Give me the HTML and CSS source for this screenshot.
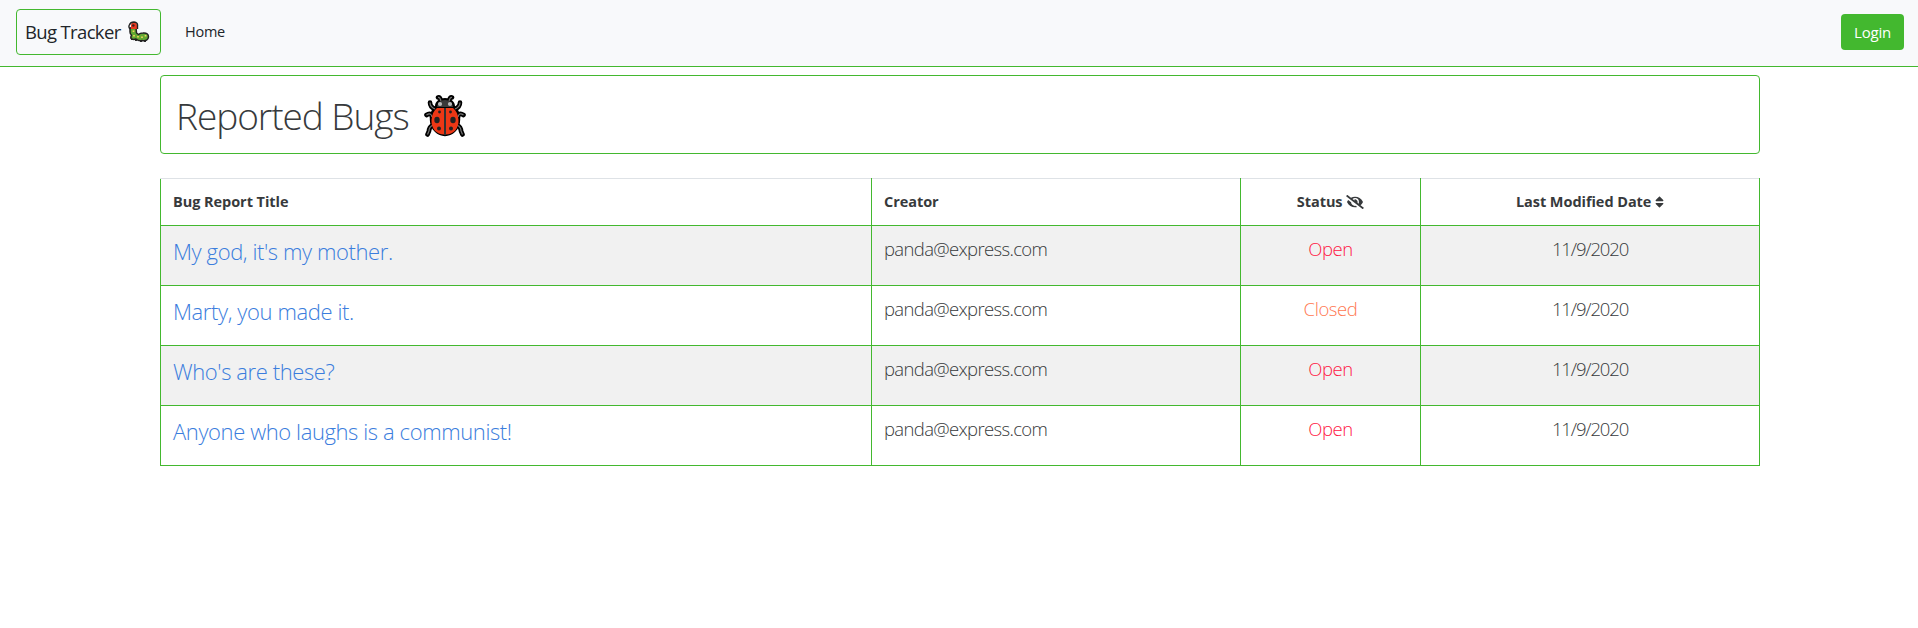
FILE: index.html
```html
<!DOCTYPE html>
<html lang="en">
<head>
<meta charset="utf-8">
<title>Bug Tracker</title>
<link rel="stylesheet" href="styles.css">
</head>
<body>
<nav class="navbar">
  <a class="brand"><span class="brand-text">Bug Tracker</span>
    <svg class="brand-icon" viewBox="0 0 22 22">
      <path d="M2 7V11Q2 13 3.500 14Q2.500 16 3 17.500Q5 19 8 18Q11 20.500 14 19.500Q20 20.500 20.500 16Q20.500 11.500 15 12Q12 12 10.500 13.500L8.500 12L8 6Z" fill="#62a832" stroke="#222" stroke-width="1.500" stroke-linejoin="round"/>
      <path d="M4 18v1M8 18.500v1.500M13 19v2M17 19v2" stroke="#222" stroke-width="1.900"/>
      <path d="M3 8V4.500Q3 1.500 6 1.500Q9.300 1.500 9 5V8Z" fill="#ea3b20"/>
      <path d="M2 8Q.300 6 1.300 4Q2.500 1 6 1Q10 1.500 9.500 5V8" fill="none" stroke="#222" stroke-width="1.400"/>
      <circle cx="5.300" cy="4.500" r="1.300" fill="#3f2020"/>
      <path d="M5.500 9.500v1.600M6 14v1.600M10 15v1.600M14 15.500v1.600M17.500 14v1.600" stroke="#f2d45c" stroke-width="1.700"/>
    </svg>
  </a>
  <a class="nav-link">Home</a>
  <button class="login">Login</button>
</nav>
<main class="container">
  <header class="heading">
    <h1 class="heading-text">Reported Bugs</h1>
    <svg class="heading-icon" viewBox="0 0 42 42">
      <g fill="none" stroke="#000" stroke-width="4.600" stroke-linecap="round" stroke-linejoin="round">
        <path id="legs" d="M17 6Q16 2 14 2.500M25 6Q26 2 28 2.500M11 14Q6 12 6 7.500M31 14Q36 12 36 7.500M8 22Q7 17 2.500 20M34 22Q35 17 39.500 20M9 30Q5 32 5 36L3.500 39.500M33 30Q37 32 37 36L38.500 39.500"/>
      </g>
      <path d="M21 3C27 3 31 7 31 11C38 17 38 31 31 37C26 42.500 16 42.500 11 37C4 31 4 17 11 11C11 7 15 3 21 3Z" fill="#000"/>
      <use href="#legs" class="leg-highlight"/>
      <path d="M13 12Q14 5 21 5Q28 5 29 12Z" fill="#3a3a3a"/>
      <path d="M20 13V39.500C13 39.500 7 34 7.500 25Q8 17 13 13ZM22 13V39.500C29 39.500 35 34 34.500 25Q34 17 29 13Z" fill="#ed3715"/>
      <rect x="20" y="13" width="2" height="27" fill="#333"/>
      <circle cx="16" cy="9" r="2.100" fill="#bbb"/><circle cx="26" cy="9" r="2.100" fill="#bbb"/>
      <g fill="#222"><circle cx="15.500" cy="17" r="1.400"/><circle cx="26.500" cy="17" r="1.400"/><ellipse cx="13" cy="25" rx="2.700" ry="3.300"/><ellipse cx="29" cy="25" rx="2.700" ry="3.300"/><circle cx="15" cy="33.500" r="2"/><circle cx="27" cy="33.500" r="2"/></g>
    </svg>
  </header>
  <table class="bugs">
    <colgroup><col class="c-title"><col class="c-creator"><col class="c-status"><col class="c-date"></colgroup>
    <thead>
      <tr><th>Bug Report Title</th><th>Creator</th>
      <th class="center">Status <svg class="eye" viewBox="0 0 640 512"><path fill="currentColor" d="M320 400c-75.850 0-137.250-58.710-142.900-133.110L72.200 185.820c-13.790 17.300-26.480 35.590-36.720 55.590a32.350 32.350 0 0 0 0 29.190C89.710 376.410 197.070 448 320 448c26.910 0 52.870-4 77.890-10.460L346 397.390a144.130 144.130 0 0 1-26 2.610zm313.820 58.100l-110.550-85.440a331.250 331.250 0 0 0 81.250-102.070 32.350 32.350 0 0 0 0-29.190C550.290 135.590 442.930 64 320 64a308.150 308.150 0 0 0-147.320 37.700L45.460 3.370A16 16 0 0 0 23 6.180L3.370 31.450A16 16 0 0 0 6.180 53.900l588.360 454.730a16 16 0 0 0 22.460-2.810l19.640-25.270a16 16 0 0 0-2.820-22.450zm-183.720-142l-39.300-30.380A94.750 94.750 0 0 0 416 256a94.760 94.760 0 0 0-121.310-92.210A47.650 47.650 0 0 1 304 192a46.640 46.640 0 0 1-1.540 10l-73.610-56.890A142.310 142.310 0 0 1 320 112a143.920 143.920 0 0 1 144 144c0 21.630-5.290 41.790-13.900 60.110z"/></svg></th>
      <th class="center">Last Modified Date <svg class="sort" viewBox="0 0 320 512"><path fill="currentColor" d="M41 288h238c21.400 0 32.100 25.900 17 41L177 448c-9.400 9.400-24.600 9.400-33.900 0L24 329c-15.100-15.100-4.400-41 17-41zm255-105L177 64c-9.400-9.400-24.600-9.400-33.900 0L24 183c-15.100 15.100-4.400 41 17 41h238c21.400 0 32.100-25.900 17-41z"/></svg></th></tr>
    </thead>
    <tbody>
      <tr><td class="title">My god, it's my mother.</td><td class="creator">panda@express.com</td><td class="center open">Open</td><td class="center date">11/9/2020</td></tr>
      <tr><td class="title">Marty, you made it.</td><td class="creator">panda@express.com</td><td class="center closed">Closed</td><td class="center date">11/9/2020</td></tr>
      <tr><td class="title">Who's are these?</td><td class="creator">panda@express.com</td><td class="center open">Open</td><td class="center date">11/9/2020</td></tr>
      <tr><td class="title">Anyone who laughs is a communist!</td><td class="creator">panda@express.com</td><td class="center open">Open</td><td class="center date">11/9/2020</td></tr>
    </tbody>
  </table>
</main>
</body>
</html>
```
FILE: styles.css
```css
* { box-sizing: border-box; }
body { margin: 0; background: #fff; color: #373a3c; font: 400 15px/24px "Open Sans", sans-serif; }
.navbar { display: flex; align-items: center; height: 67px; padding: 0 14px 3px 16px; background: #f8f9fb; border-bottom: 1px solid #43b82f; color: #212529; }
.brand { display: flex; align-items: center; width: 145px; height: 46px; padding-left: 8px; border: 1px solid #43b82f; border-radius: 4px; font-size: 18.500px; letter-spacing: -0.650px; line-height: 30px; }
.brand-text { width: 103px; white-space: nowrap; }
.brand-icon { width: 22px; height: 22px; flex: none; }
.nav-link { margin-left: 24px; padding-top: 1px; font-size: 14.500px; letter-spacing: -0.250px; }
.login { width: 63px; height: 36px; margin-left: auto; padding: 0; border: 0; border-radius: 4px; background: #43b82f; color: #fff; font: 400 15px/24px "Open Sans", sans-serif; letter-spacing: -0.200px; }
.container { width: 1600px; margin: 8px 0 0 160px; }
.heading { display: flex; align-items: center; height: 79px; padding: 3px 0 0 15px; border: 1px solid #43b82f; border-radius: 4px; }
.heading-text { width: 248px; margin: 0; white-space: nowrap; font-size: 37px; font-weight: 300; line-height: 48px; letter-spacing: -1.050px; }
.heading-icon { width: 42px; height: 42px; flex: none; }
.leg-highlight { fill: none; stroke: #777; stroke-width: 1.200px; }
#legs { stroke-width: inherit; }
.bugs { width: 1599px; margin-top: 24px; table-layout: fixed; border-collapse: collapse; }
.c-title { width: 711px; }
.c-creator { width: 369px; }
.c-status { width: 180px; }
.c-date { width: 339px; }
.bugs th, .bugs td { padding: 11px 12px; border: 1px solid #43b82f; text-align: left; vertical-align: top; white-space: nowrap; }
.bugs th { height: 47px; border-top-color: #dee2e6; font-size: 14.500px; font-weight: 700; line-height: 24px; letter-spacing: -0.050px; }
.bugs td { height: 60px; font-size: 18.500px; font-weight: 300; line-height: 24px; letter-spacing: -0.650px; }
.bugs tbody tr:nth-child(odd) { background: #f1f1f1; }
.bugs .title { color: #3b7ddd; font-size: 22px; line-height: 29px; letter-spacing: -0.400px; }
.bugs .center { text-align: center; }
.bugs .date { letter-spacing: -1.150px; }
.bugs .open { color: #ff1744; letter-spacing: -0.400px; }
.bugs .closed { color: #ff7851; letter-spacing: -0.400px; }
.eye { width: 18px; height: 14px; vertical-align: -2px; }
.sort { width: 9px; height: 14px; vertical-align: -2px; }
```
